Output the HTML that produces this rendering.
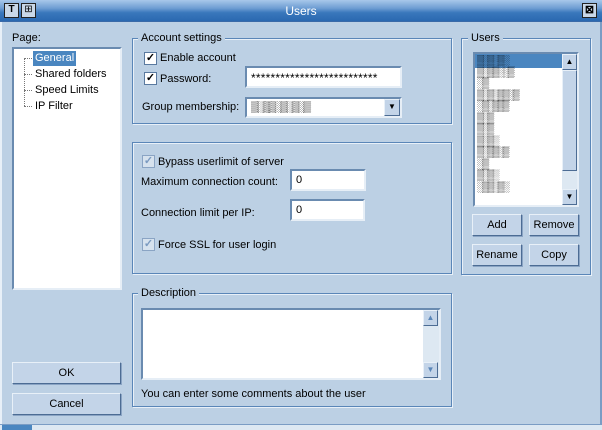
<!DOCTYPE html><html><head><style>
*{box-sizing:border-box;margin:0;padding:0}
body{width:602px;height:430px;background:#bcd0e4;font-family:"Liberation Sans",sans-serif;font-size:11px;color:#000;position:relative;overflow:hidden}
.a{position:absolute}
.title{left:0;top:0;width:602px;height:22px;background:linear-gradient(#a8c8ea,#6c9cd2 40%,#3a78bc 60%,#2a68b0);border-bottom:1px solid #3a6aa8}
.tb{width:15px;height:15px;background:#c9d8e8;border:1px solid #222;top:3px}
.grp{border:1px solid #5a86b8;box-shadow:inset 1px 1px 0 #e8f0f8,1px 1px 0 #e8f0f8}
.lg{background:#bcd0e4;padding:0 3px}
.inp{background:#fff;border:2px solid #6a8bb0;border-right-color:#e6eef6;border-bottom-color:#e6eef6;padding:1px 4px}
.btn{background:#c3d4e8;border:1px solid #e8f0f8;border-right-color:#4c6c94;border-bottom-color:#4c6c94;box-shadow:1px 1px 0 #8aa4c4;text-align:center;line-height:20px}
.cb{width:13px;height:13px;background:#fff;border:1px solid #5a7aa0;font-size:11px;line-height:11px;text-align:center;font-weight:bold}
.cbd{background:#d6e2ee;color:#7a9ac0;border-color:#8aa4c4}
.sb{background:#dde8f2}
.sbb{width:15px;height:16px;background:#c3d4e8;border:1px solid #e8f0f8;border-right-color:#4c6c94;border-bottom-color:#4c6c94;font-size:8px;text-align:center;line-height:14px}
.sc{color:#000;font-size:10px;line-height:11.5px;letter-spacing:-2px;overflow:hidden}
</style></head><body>
<div class="a title"></div>
<div class="a tb" style="left:4px;font-size:10px;line-height:12px;text-align:center;font-weight:bold">T</div>
<div class="a tb" style="left:21px;font-size:10px;line-height:12px;text-align:center">⊞</div>
<div class="a tb" style="left:582px;font-size:11px;line-height:12px;text-align:center;font-weight:bold">⊠</div>
<div class="a" style="left:0;top:3px;width:602px;text-align:center;color:#fff;font-size:12px;line-height:16px">Users</div>
<div class="a" style="left:0;top:22px;width:2px;height:408px;background:#e8f0f8"></div>
<div class="a" style="left:600px;top:22px;width:2px;height:408px;background:#7a9cc4"></div>

<div class="a" style="left:12px;top:32px">Page:</div>
<div class="a inp" style="left:12px;top:47px;width:110px;height:243px;padding:0"></div>
<div class="a" style="left:24px;top:58px;width:1px;height:48px;border-left:1px dotted #777"></div>
<div class="a" style="left:24px;top:58px;width:8px;border-top:1px dotted #777"></div>
<div class="a" style="left:24px;top:74px;width:8px;border-top:1px dotted #777"></div>
<div class="a" style="left:24px;top:90px;width:8px;border-top:1px dotted #777"></div>
<div class="a" style="left:24px;top:106px;width:8px;border-top:1px dotted #777"></div>
<div class="a" style="left:33px;top:51px;background:#4a86c0;color:#fff;padding:0 2px;line-height:15px">General</div>
<div class="a" style="left:35px;top:67px;line-height:15px">Shared folders</div>
<div class="a" style="left:35px;top:83px;line-height:15px">Speed Limits</div>
<div class="a" style="left:35px;top:99px;line-height:15px">IP Filter</div>
<div class="a btn" style="left:12px;top:362px;width:109px;height:22px">OK</div>
<div class="a btn" style="left:12px;top:393px;width:109px;height:22px">Cancel</div>

<div class="a grp" style="left:132px;top:38px;width:320px;height:86px"></div>
<div class="a lg" style="left:138px;top:32px">Account settings</div>
<div class="a cb" style="left:144px;top:52px">✓</div><div class="a" style="left:160px;top:52px">Enable account</div>
<div class="a cb" style="left:144px;top:72px">✓</div><div class="a" style="left:160px;top:73px">Password:</div>
<div class="a inp" style="left:245px;top:66px;width:157px;height:22px;line-height:18px;font-size:12px;letter-spacing:0.2px">**************************</div>
<div class="a" style="left:142px;top:101px">Group membership:</div>
<div class="a inp sc" style="left:245px;top:97px;width:157px;height:21px;line-height:15px;font-size:11px">▒░▒▒░▒░▒░▒</div>
<div class="a sbb" style="left:384px;top:99px;height:17px;width:16px">▼</div>

<div class="a grp" style="left:132px;top:142px;width:320px;height:132px"></div>
<div class="a cb cbd" style="left:142px;top:155px">✓</div><div class="a" style="left:158px;top:156px">Bypass userlimit of server</div>
<div class="a" style="left:141px;top:176px">Maximum connection count:</div>
<div class="a inp" style="left:290px;top:169px;width:76px;height:22px;line-height:16px">0</div>
<div class="a" style="left:141px;top:207px">Connection limit per IP:</div>
<div class="a inp" style="left:290px;top:199px;width:75px;height:22px;line-height:16px">0</div>
<div class="a cb cbd" style="left:142px;top:238px">✓</div><div class="a" style="left:158px;top:239px">Force SSL for user login</div>

<div class="a grp" style="left:132px;top:293px;width:320px;height:114px"></div>
<div class="a lg" style="left:138px;top:287px">Description</div>
<div class="a inp" style="left:141px;top:308px;width:300px;height:72px"></div>
<div class="a sb" style="left:423px;top:310px;width:16px;height:68px"></div>
<div class="a sbb" style="left:423px;top:310px;color:#5a86b8">▲</div>
<div class="a sbb" style="left:423px;top:362px;color:#5a86b8">▼</div>
<div class="a" style="left:141px;top:388px">You can enter some comments about the user</div>

<div class="a grp" style="left:461px;top:38px;width:130px;height:237px"></div>
<div class="a lg" style="left:468px;top:32px">Users</div>
<div class="a inp" style="left:473px;top:52px;width:106px;height:155px;padding:0"></div>
<div class="a" style="left:475px;top:54px;width:87px;height:14px;background:#4a86c0"></div>
<div class="a sc" style="left:477px;top:55px;width:70px;height:148px">▒░▒░▒░<br>▒░▒▒░░▒<br>░▒<br>▒░▒░▒▒░▒<br>░▒░▒▒▒<br>▒░▒<br>▒░▒<br>▒░▒░<br>▒░▒▒░▒<br>░▒<br>▒░▒░<br>░▒▒░▒░</div>
<div class="a sb" style="left:562px;top:54px;width:15px;height:151px"></div>
<div class="a sbb" style="left:562px;top:54px">▲</div>
<div class="a sbb" style="left:562px;top:70px;height:101px"></div>
<div class="a sbb" style="left:562px;top:189px">▼</div>
<div class="a btn" style="left:472px;top:214px;width:50px;height:22px">Add</div>
<div class="a btn" style="left:529px;top:214px;width:50px;height:22px">Remove</div>
<div class="a btn" style="left:472px;top:244px;width:50px;height:22px">Rename</div>
<div class="a btn" style="left:529px;top:244px;width:50px;height:22px">Copy</div>

<div class="a" style="left:0;top:424px;width:602px;height:6px;background:#dde8f2;border-top:1px solid #7a9cc4"></div>
<div class="a" style="left:2px;top:425px;width:30px;height:5px;background:#4a86c0"></div>
</body></html>
